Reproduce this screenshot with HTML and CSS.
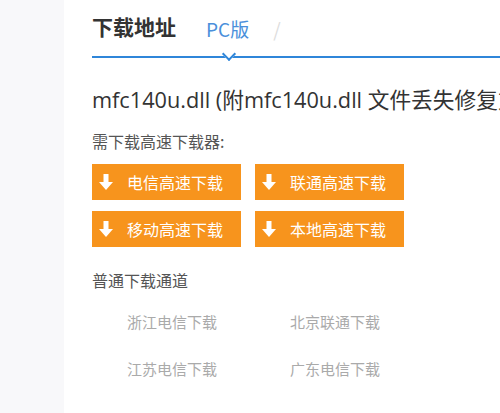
FILE: index.html
```html
<!DOCTYPE html>
<html lang="zh-CN">
<head>
  <meta charset="UTF-8" />
  <title>下载地址</title>
  <link rel="stylesheet" href="styles.css">
</head>
<body>
  <div id="container">
    <div class="side"></div>
    <div class="main">
      <div class="tabs">
        <h2>下载地址</h2>
        <span class="tab active">PC版</span>
        <span class="sep">/</span>
      </div>

      <h1 class="file-name">mfc140u.dll (附mfc140u.dll 文件丢失修复方法)</h1>

      <p class="label">需下载高速下载器:</p>
      <div class="fast-list">
        <a class="fast-btn" href="#"><svg viewBox="0 0 14 17"><path d="M4.5 0h5v8h4.5L7 16 0 8h4.5z" fill="#fff"/></svg>电信高速下载</a>
        <a class="fast-btn" href="#"><svg viewBox="0 0 14 17"><path d="M4.5 0h5v8h4.5L7 16 0 8h4.5z" fill="#fff"/></svg>联通高速下载</a>
        <a class="fast-btn" href="#"><svg viewBox="0 0 14 17"><path d="M4.5 0h5v8h4.5L7 16 0 8h4.5z" fill="#fff"/></svg>移动高速下载</a>
        <a class="fast-btn" href="#"><svg viewBox="0 0 14 17"><path d="M4.5 0h5v8h4.5L7 16 0 8h4.5z" fill="#fff"/></svg>本地高速下载</a>
      </div>

      <p class="label normal">普通下载通道</p>
      <div class="normal-list">
        <a href="#">浙江电信下载</a>
        <a href="#">北京联通下载</a>
        <a href="#">江苏电信下载</a>
        <a href="#">广东电信下载</a>
      </div>
    </div>
  </div>
</body>
</html>
```

FILE: styles.css
```css
* {
  box-sizing: border-box;
  margin: 0;
  padding: 0;
}

html, body {
  height: 100%;
  font-family: "Noto Sans CJK SC", "Noto Sans", sans-serif;
  background: #f8f8fa;
  overflow: hidden;
}

#container {
  display: flex;
  height: 100%;
}

.side {
  width: 64px;
  flex-shrink: 0;
}

.main {
  flex: 1;
  background: #fff;
  padding-left: 28px;
  white-space: nowrap;
  overflow: hidden;
}

.tabs {
  position: relative;
  display: flex;
  align-items: center;
  height: 58px;
  border-bottom: 2px solid #2f86d9;
  padding-bottom: 4px;
}

.tabs h2 {
  font-size: 21px;
  font-weight: bold;
  color: #333;
  margin-right: 30px;
}

.tab {
  position: relative;
  height: 100%;
  display: flex;
  align-items: center;
  font-size: 19px;
  color: #4a8fdb;
  margin-top: 4px;
}

.tab.active::after {
  content: "";
  position: absolute;
  left: 50%;
  bottom: -5px;
  width: 8px;
  height: 8px;
  margin-left: -4px;
  background: #fff;
  border-right: 2px solid #2f86d9;
  border-bottom: 2px solid #2f86d9;
  transform: rotate(45deg);
}

.sep {
  font-size: 19px;
  color: #ddd;
  margin-left: 24px;
  margin-top: 4px;
}

.file-name {
  font-family: "Open Sans", "Noto Sans CJK SC", sans-serif;
  font-size: 21.7px;
  font-weight: normal;
  color: #333;
  margin-top: 28px;
  line-height: 28px;
}

.label {
  font-size: 16px;
  color: #555;
  margin-top: 17px;
  line-height: 20px;
}

.fast-list {
  display: grid;
  grid-template-columns: 149px 149px;
  column-gap: 14px;
  row-gap: 11px;
  margin-top: 13px;
}

.fast-btn {
  display: flex;
  align-items: center;
  height: 36px;
  background: #f7941d;
  color: #fff;
  font-size: 16px;
  text-decoration: none;
  padding-left: 7px;
}

.fast-btn svg {
  width: 14px;
  height: 17px;
  margin-right: 14px;
}

.label.normal {
  margin-top: 23px;
}

.normal-list {
  display: grid;
  grid-template-columns: 163px 163px;
  row-gap: 27px;
  padding-left: 35px;
  margin-top: 22px;
}

.normal-list a {
  font-size: 15px;
  color: #aaa;
  text-decoration: none;
  line-height: 20px;
}
```
